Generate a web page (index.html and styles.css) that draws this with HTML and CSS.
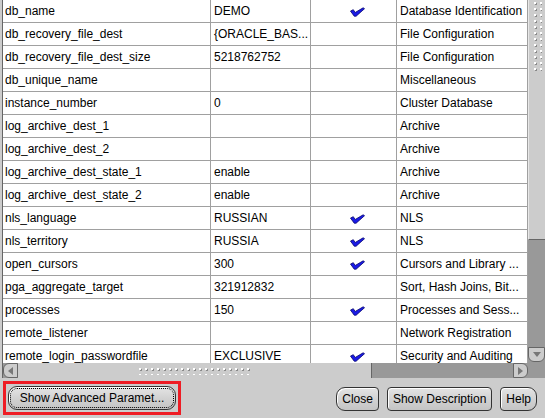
FILE: index.html
```html
<html>
  <head>
    <title>Initialization Parameters</title>
    <link rel="stylesheet" href="styles.css">
  </head>
  <body>
    <div class="window">
      <div class="scroll-pane">
        <div class="viewport">
          <div class="params">
            <div class="row"><div class="cell name">db_name</div><div class="cell">DEMO</div><div class="cell check"><svg class="tick" viewBox="0 0 16 10"><polygon points="0.5,4 3.5,2.5 5.5,5.5 14,0.5 15.5,1.5 6.5,9.5 4.5,9.5"/></svg></div><div class="cell">Database Identification</div></div>
            <div class="row"><div class="cell name">db_recovery_file_dest</div><div class="cell">{ORACLE_BAS...</div><div class="cell"></div><div class="cell">File Configuration</div></div>
            <div class="row"><div class="cell name">db_recovery_file_dest_size</div><div class="cell">5218762752</div><div class="cell"></div><div class="cell">File Configuration</div></div>
            <div class="row"><div class="cell name">db_unique_name</div><div class="cell"></div><div class="cell"></div><div class="cell">Miscellaneous</div></div>
            <div class="row"><div class="cell name">instance_number</div><div class="cell">0</div><div class="cell"></div><div class="cell">Cluster Database</div></div>
            <div class="row"><div class="cell name">log_archive_dest_1</div><div class="cell"></div><div class="cell"></div><div class="cell">Archive</div></div>
            <div class="row"><div class="cell name">log_archive_dest_2</div><div class="cell"></div><div class="cell"></div><div class="cell">Archive</div></div>
            <div class="row"><div class="cell name">log_archive_dest_state_1</div><div class="cell">enable</div><div class="cell"></div><div class="cell">Archive</div></div>
            <div class="row"><div class="cell name">log_archive_dest_state_2</div><div class="cell">enable</div><div class="cell"></div><div class="cell">Archive</div></div>
            <div class="row"><div class="cell name">nls_language</div><div class="cell">RUSSIAN</div><div class="cell check"><svg class="tick" viewBox="0 0 16 10"><polygon points="0.5,4 3.5,2.5 5.5,5.5 14,0.5 15.5,1.5 6.5,9.5 4.5,9.5"/></svg></div><div class="cell">NLS</div></div>
            <div class="row"><div class="cell name">nls_territory</div><div class="cell">RUSSIA</div><div class="cell check"><svg class="tick" viewBox="0 0 16 10"><polygon points="0.5,4 3.5,2.5 5.5,5.5 14,0.5 15.5,1.5 6.5,9.5 4.5,9.5"/></svg></div><div class="cell">NLS</div></div>
            <div class="row"><div class="cell name">open_cursors</div><div class="cell">300</div><div class="cell check"><svg class="tick" viewBox="0 0 16 10"><polygon points="0.5,4 3.5,2.5 5.5,5.5 14,0.5 15.5,1.5 6.5,9.5 4.5,9.5"/></svg></div><div class="cell">Cursors and Library ...</div></div>
            <div class="row"><div class="cell name">pga_aggregate_target</div><div class="cell">321912832</div><div class="cell"></div><div class="cell">Sort, Hash Joins, Bit...</div></div>
            <div class="row"><div class="cell name">processes</div><div class="cell">150</div><div class="cell check"><svg class="tick" viewBox="0 0 16 10"><polygon points="0.5,4 3.5,2.5 5.5,5.5 14,0.5 15.5,1.5 6.5,9.5 4.5,9.5"/></svg></div><div class="cell">Processes and Sess...</div></div>
            <div class="row"><div class="cell name">remote_listener</div><div class="cell"></div><div class="cell"></div><div class="cell">Network Registration</div></div>
            <div class="row"><div class="cell name">remote_login_passwordfile</div><div class="cell">EXCLUSIVE</div><div class="cell check"><svg class="tick" viewBox="0 0 16 10"><polygon points="0.5,4 3.5,2.5 5.5,5.5 14,0.5 15.5,1.5 6.5,9.5 4.5,9.5"/></svg></div><div class="cell">Security and Auditing</div></div>
          </div>
        </div>

        <div class="vbar">
          <div class="vthumb"><div class="grip"></div></div>
          <div class="vtrack"></div>
          <div class="arrow down"><svg viewBox="0 0 8 5"><polygon points="0,0 8,0 4,5"/></svg></div>
        </div>

        <div class="hbar">
          <div class="arrow left"><svg viewBox="0 0 5 8"><polygon points="5,0 5,8 0,4"/></svg></div>
          <div class="hthumb"><div class="grip"></div></div>
          <div class="htrack"></div>
          <div class="arrow right"><svg viewBox="0 0 5 8"><polygon points="0,0 0,8 5,4"/></svg></div>
        </div>
        <div class="corner"></div>
      </div>

      <div class="footer">
        <div class="marked">
          <button class="btn rounded focused">Show Advanced Paramet...</button>
        </div>
        <div class="actions">
          <button class="btn first">Close</button>
          <button class="btn">Show Description</button>
          <button class="btn last">Help</button>
        </div>
      </div>
    </div>
  </body>
</html>
```

FILE: styles.css
```css
:root {
  --panel: #cccccc;
  --grid-line: #a0a0a0;
  --track: #999999;
  --edge: #666666;
  --dark-edge: #333333;
  --row-height: 23px;
  --font: "Liberation Sans", Arial, sans-serif;
}

html,
body {
  margin: 0;
  padding: 0;
  background: var(--panel);
  font-family: var(--font);
  font-size: 12px;
  color: #000000;
}

.window {
  width: 545px;
  height: 418px;
  display: flex;
  flex-direction: column;
  overflow: hidden;
}

/* table + scroll bars */

.scroll-pane {
  height: 378px;
  margin-left: 2px;
  border-left: 1px solid var(--edge);
  display: grid;
  grid-template-columns: 525px 17px;
  grid-template-rows: 363px 15px;
}

.viewport {
  overflow: hidden;
  background: #ffffff;
}

.row {
  display: grid;
  grid-template-columns: 208px 100px 86px 131px;
  height: var(--row-height);
}

.cell {
  box-sizing: border-box;
  border-right: 1px solid var(--grid-line);
  border-bottom: 1px solid var(--grid-line);
  padding: 1px 3px 0;
  line-height: 21px;
  white-space: nowrap;
  overflow: hidden;
}

.cell.name {
  padding-left: 2px;
}

.cell.check {
  display: flex;
  align-items: center;
  justify-content: center;
  padding: 0 0 0 7px;
}

.tick {
  width: 15px;
  height: 10px;
  margin-top: 1px;
}

.tick polygon {
  fill: #1a1ae6;
  stroke: #000066;
  stroke-width: 0.8;
  stroke-linejoin: round;
}

.vbar {
  display: flex;
  flex-direction: column;
  background: var(--track);
}

.vthumb {
  height: 240px;
  background: var(--panel);
  border-left: 1px solid #e8e8e8;
  border-bottom: 1px solid var(--edge);
  box-sizing: border-box;
  padding: 0 3px;
}

.vthumb .grip {
  height: 74px;
}

.grip {
  background-image:
    radial-gradient(circle, #ffffff 0.8px, transparent 0.9px),
    radial-gradient(circle, #8a8a8a 0.8px, transparent 0.9px);
  background-size: 6px 6px;
  background-position: 0 0, 1px 1px;
}

.vtrack {
  flex: 1;
}

.hbar {
  display: flex;
  background: var(--track);
}

.hthumb {
  width: 354px;
  background: var(--panel);
  border-right: 1px solid var(--edge);
  box-sizing: border-box;
  display: flex;
  justify-content: center;
  align-items: center;
}

.hthumb .grip {
  width: 116px;
  height: 9px;
}

.htrack {
  flex: 1;
}

.arrow {
  background: var(--panel);
  display: flex;
  align-items: center;
  justify-content: center;
  box-sizing: border-box;
}

.arrow svg {
  fill: #777777;
}

.arrow.down {
  height: 15px;
  margin-bottom: 1px;
  border: 1px solid var(--edge);
  border-radius: 0 0 6px 6px;
}

.arrow.down svg {
  width: 8px;
  height: 5px;
}

.arrow.left {
  width: 15px;
  border: 1px solid var(--edge);
  border-radius: 6px 0 0 6px;
}

.arrow.right {
  width: 15px;
  border: 1px solid var(--edge);
  border-radius: 0 6px 6px 0;
}

.arrow.left svg,
.arrow.right svg {
  width: 5px;
  height: 8px;
}

.corner {
  background: var(--track);
}

/* button bar */

.footer {
  flex: 1;
  display: flex;
  align-items: center;
  padding: 0 8px 0 3px;
}

.marked {
  border: 3px solid #ee1c24;
  padding: 2px 2px;
  display: flex;
}

.actions {
  margin-left: auto;
  display: flex;
  gap: 8px;
  padding-top: 1px;
}

.btn {
  font-family: var(--font);
  font-size: 12px;
  color: #000000;
  height: 24px;
  padding: 0 5px;
  background: linear-gradient(#e4e4e4, #cfcfcf 60%, #c4c4c4);
  border: 1px solid var(--dark-edge);
  border-radius: 4px;
  box-shadow: inset 1px 1px 0 #ffffff;
}

.btn.rounded {
  width: 168px;
  border-radius: 9px;
}

.btn.first {
  border-radius: 9px 4px 4px 9px;
}

.btn.last {
  border-radius: 4px 9px 9px 4px;
}

.btn.focused {
  outline: 1px dotted #000000;
  outline-offset: -3px;
}
```
